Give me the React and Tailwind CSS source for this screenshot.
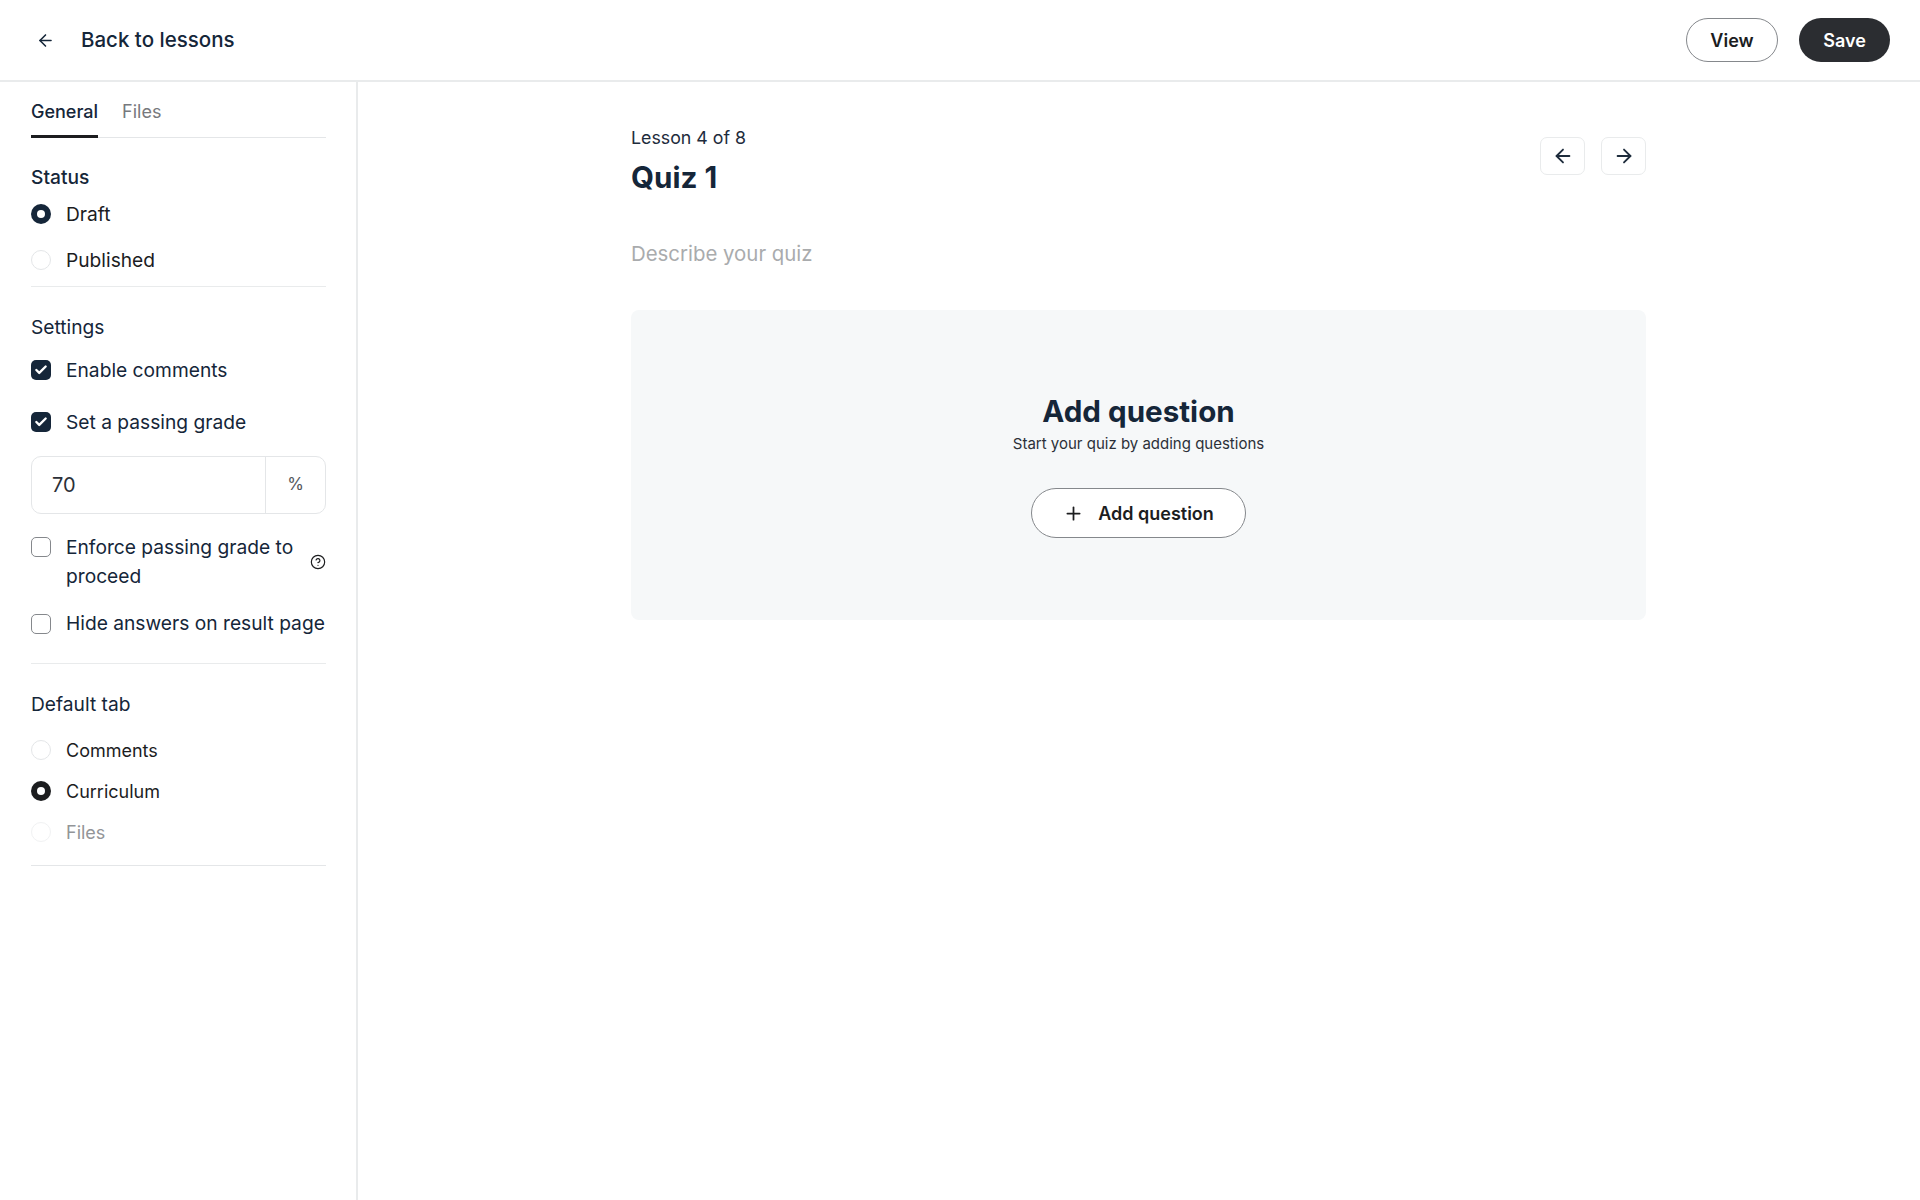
import React from "react";
import { ArrowLeft, ArrowRight, Plus, Check, CircleHelp } from "lucide-react";

const Radio = ({ label, checked, dark, muted, small, className = "" }) => (
  <div className={`flex items-center gap-[15px] ${className}`}>
    {checked ? (
      <span className={`w-[20px] h-[20px] rounded-full flex items-center justify-center ${dark ? "bg-[#1c1d1f]" : "bg-[#152639]"}`}>
        <span className="w-[8px] h-[8px] rounded-full bg-white"></span>
      </span>
    ) : (
      <span className={`w-[20px] h-[20px] rounded-full border ${muted ? "border-[#f1f2f3]" : "border-[#e4e6e8]"}`}></span>
    )}
    <span className={`${small ? "text-[18px]" : "text-[19.2px]"} ${muted ? "text-[#939598]" : "text-[#1c1d1f]"}`}>{label}</span>
  </div>
);

const Checkbox = ({ checked }) =>
  checked ? (
    <span className="w-[20px] h-[20px] rounded-[5px] bg-[#152639] flex items-center justify-center shrink-0">
      <Check size={14} strokeWidth={4} color="white" />
    </span>
  ) : (
    <span className="block w-[20px] h-[20px] rounded-[5px] border-[1.5px] border-[#85888c] bg-white shrink-0"></span>
  );

const Sidebar = () => (
  <aside className="w-[358px] shrink-0 border-r-2 border-[#e9ebec] pl-[31px] pr-[30px]">
    <div className="flex gap-[24px] border-b border-[#e4e6e8] h-[56px]">
      <div className="h-[56px] border-b-[3px] border-[#1c1d1f] pt-[18px] text-[18px] leading-[24px] font-medium text-[#152639]">General</div>
      <div className="pt-[18px] text-[18px] leading-[24px] text-[#77797d]">Files</div>
    </div>

    <div className="border-b border-[#e9ebec] h-[149px]">
      <div className="pt-[27px] text-[19.2px] leading-[24px] font-medium text-[#152639]">Status</div>
      <Radio label="Draft" checked className="mt-[11px]" />
      <Radio label="Published" className="mt-[17px]" />
    </div>

    <div className="pt-[28px] text-[19.2px] leading-[24px] text-[#152639]">Settings</div>
    <div className="mt-[19px] flex items-center gap-[15px] text-[19.2px] leading-[24px] text-[#152639]">
      <Checkbox checked />
      Enable comments
    </div>
    <div className="mt-[28px] flex items-center gap-[15px] text-[19.2px] leading-[24px] text-[#152639]">
      <Checkbox checked />
      Set a passing grade
    </div>

    <div className="mt-[22px] h-[58px] flex border border-[#e4e6e8] rounded-[10px]">
      <div className="flex-1 flex items-center pl-[20px] text-[20px] text-[#2b3038]">70</div>
      <div className="w-[60px] border-l border-[#e4e6e8] flex items-center justify-center text-[17px] text-[#55585d]">%</div>
    </div>

    <div className="mt-[19px] flex gap-[15px] items-start text-[19.2px] leading-[29px] text-[#152639]">
      <span className="mt-[4px] w-[20px] shrink-0"><Checkbox /></span>
      <span className="w-[236px] shrink-0">Enforce passing grade to proceed</span>
      <span className="self-center -ml-[7px]"><CircleHelp size={16} color="#1c1d1f" strokeWidth={1.75} /></span>
    </div>

    <div className="mt-[18px] flex items-center gap-[15px] text-[19.2px] leading-[29px] whitespace-nowrap text-[#152639]">
      <Checkbox />
      Hide answers on result page
    </div>
    <div className="mt-[25px] border-b border-[#e9ebec]"></div>

    <div className="pt-[28px] text-[19.2px] leading-[24px] text-[#152639]">Default tab</div>
    <Radio label="Comments" small className="mt-[22px] h-[24px]" />
    <Radio label="Curriculum" checked dark small className="mt-[17px] h-[24px]" />
    <Radio label="Files" muted small className="mt-[17px] h-[24px]" />
    <div className="mt-[21px] border-b border-[#e4e6e8]"></div>
  </aside>
);

export default function App() {
  return (
    <div className="min-h-screen h-[1200px] bg-white flex flex-col font-['Inter',sans-serif]">
      <header className="h-[82px] shrink-0 border-b-2 border-[#e9ebec] flex items-center justify-between pl-[36px] pr-[30px]">
        <div className="flex items-center gap-[26px]">
          <ArrowLeft size={19} color="#152639" strokeWidth={2} />
          <span className="text-[20.5px] font-medium text-[#152639]">Back to lessons</span>
        </div>
        <div className="flex items-center gap-[21px]">
          <button className="w-[92px] h-[44px] rounded-full border border-[#85888c] bg-white text-[18px] font-semibold text-[#1c1d1f]">View</button>
          <button className="w-[91px] h-[44px] rounded-full bg-[#2b2d31] text-[18px] font-semibold text-white">Save</button>
        </div>
      </header>

      <div className="flex flex-1 min-h-0">
        <Sidebar />
        <main className="flex-1 pl-[273px]">
          <div className="w-[1015px]">
            <div className="flex justify-between pt-[43px]">
              <div>
                <div className="text-[17.8px] leading-[26px] text-[#1e2c3c]">Lesson 4 of 8</div>
                <h1 className="mt-[5px] text-[29.6px] leading-[42px] font-bold text-[#152639]">Quiz 1</h1>
              </div>
              <div className="flex gap-[16px] pt-[12px]">
                <button className="w-[45px] h-[38px] border border-[#e9ebec] rounded-[7px] flex items-center justify-center">
                  <ArrowLeft size={22} color="#1e2c3c" strokeWidth={2} />
                </button>
                <button className="w-[45px] h-[38px] border border-[#e9ebec] rounded-[7px] flex items-center justify-center">
                  <ArrowRight size={22} color="#1e2c3c" strokeWidth={2} />
                </button>
              </div>
            </div>

            <div className="mt-[41px] text-[20.4px] leading-[30px] text-[#a9abad]">Describe your quiz</div>

            <section className="mt-[41px] h-[310px] rounded-[8px] bg-[#f6f8f9] flex flex-col items-center pt-[80px]">
              <h2 className="text-[29.6px] leading-[42px] font-bold text-[#152639]">Add question</h2>
              <p className="mt-[1px] text-[15px] leading-[22px] text-[#2b3038]">Start your quiz by adding questions</p>
              <button className="mt-[33px] w-[215px] h-[50px] rounded-full border border-[#85888c] bg-white flex items-center justify-center gap-[14px] text-[18px] font-semibold text-[#1c1d1f]">
                <Plus size={21} color="#1c1d1f" strokeWidth={2} />
                Add question
              </button>
            </section>
          </div>
        </main>
      </div>
    </div>
  );
}
